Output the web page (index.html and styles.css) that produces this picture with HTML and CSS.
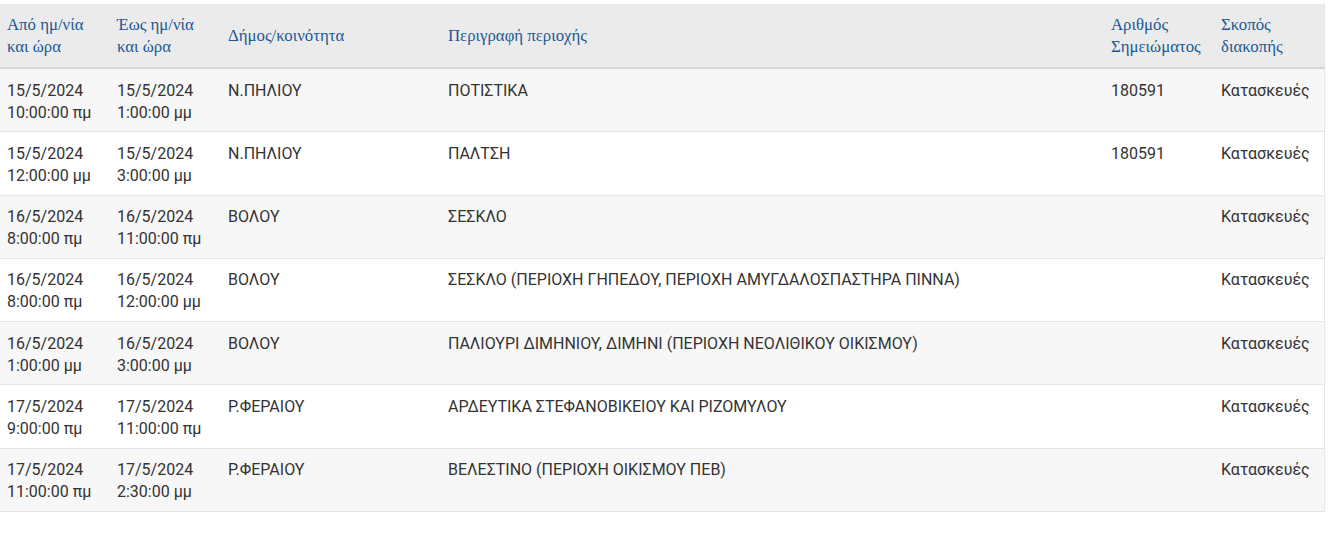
FILE: index.html
```html
<!DOCTYPE html>
<html lang="el">
<head>
<meta charset="utf-8">
<title>Διακοπές ρεύματος</title>
<link rel="stylesheet" href="styles.css">
</head>
<body>
<div class="wrap">
<table class="outages">
<colgroup>
<col class="c-from"><col class="c-to"><col class="c-dimos"><col class="c-desc"><col class="c-num"><col class="c-reason">
</colgroup>
<thead>
<tr>
<th>Από ημ/νία και ώρα</th>
<th>Έως ημ/νία και ώρα</th>
<th>Δήμος/κοινότητα</th>
<th>Περιγραφή περιοχής</th>
<th>Αριθμός Σημειώματος</th>
<th>Σκοπός διακοπής</th>
</tr>
</thead>
<tbody>
<tr><td>15/5/2024<br>10:00:00 πμ</td><td>15/5/2024<br>1:00:00 μμ</td><td>Ν.ΠΗΛΙΟΥ</td><td>ΠΟΤΙΣΤΙΚΑ</td><td>180591</td><td>Κατασκευές</td></tr>
<tr><td>15/5/2024<br>12:00:00 μμ</td><td>15/5/2024<br>3:00:00 μμ</td><td>Ν.ΠΗΛΙΟΥ</td><td>ΠΑΛΤΣΗ</td><td>180591</td><td>Κατασκευές</td></tr>
<tr><td>16/5/2024<br>8:00:00 πμ</td><td>16/5/2024<br>11:00:00 πμ</td><td>ΒΟΛΟΥ</td><td>ΣΕΣΚΛΟ</td><td></td><td>Κατασκευές</td></tr>
<tr><td>16/5/2024<br>8:00:00 πμ</td><td>16/5/2024<br>12:00:00 μμ</td><td>ΒΟΛΟΥ</td><td>ΣΕΣΚΛΟ (ΠΕΡΙΟΧΗ ΓΗΠΕΔΟΥ, ΠΕΡΙΟΧΗ ΑΜΥΓΔΑΛΟΣΠΑΣΤΗΡΑ ΠΙΝΝΑ)</td><td></td><td>Κατασκευές</td></tr>
<tr><td>16/5/2024<br>1:00:00 μμ</td><td>16/5/2024<br>3:00:00 μμ</td><td>ΒΟΛΟΥ</td><td>ΠΑΛΙΟΥΡΙ ΔΙΜΗΝΙΟΥ, ΔΙΜΗΝΙ (ΠΕΡΙΟΧΗ ΝΕΟΛΙΘΙΚΟΥ ΟΙΚΙΣΜΟΥ)</td><td></td><td>Κατασκευές</td></tr>
<tr><td>17/5/2024<br>9:00:00 πμ</td><td>17/5/2024<br>11:00:00 πμ</td><td>Ρ.ΦΕΡΑΙΟΥ</td><td>ΑΡΔΕΥΤΙΚΑ ΣΤΕΦΑΝΟΒΙΚΕΙΟΥ ΚΑΙ ΡΙΖΟΜΥΛΟΥ</td><td></td><td>Κατασκευές</td></tr>
<tr><td>17/5/2024<br>11:00:00 πμ</td><td>17/5/2024<br>2:30:00 μμ</td><td>Ρ.ΦΕΡΑΙΟΥ</td><td>ΒΕΛΕΣΤΙΝΟ (ΠΕΡΙΟΧΗ ΟΙΚΙΣΜΟΥ ΠΕΒ)</td><td></td><td>Κατασκευές</td></tr>
</tbody>
</table>
</div>
</body>
</html>
```
FILE: styles.css
```css
html, body {
  margin: 0;
  padding: 0;
  background: #ffffff;
}

.wrap {
  padding-top: 4px;
}

.outages {
  width: 1324px;
  table-layout: fixed;
  border-collapse: collapse;
  font-family: Roboto, "Noto Sans", sans-serif;
  font-size: 16px;
  color: #333333;
  border-right: 1px solid #e6e6e6;
}

.c-from { width: 110px; }
.c-to { width: 111px; }
.c-dimos { width: 221px; }
.c-desc { width: 662px; }
.c-num { width: 110px; }
.c-reason { width: 110px; }

.outages th {
  background: #ebebeb;
  font-family: "Liberation Serif", "DejaVu Serif", serif;
  font-weight: normal;
  font-size: 16.8px;
  color: #1c5897;
  text-align: left;
  vertical-align: middle;
  line-height: 22px;
  padding: 10px 7px 9px 7px;
  height: 44px;
  border-bottom: 2px solid #d6d6d6;
}

.outages th:nth-child(4),
.outages td:nth-child(4) {
  padding-left: 6px;
}

.outages td {
  vertical-align: top;
  line-height: 22px;
  padding: 10.5px 7px 7.8px 7px;
  height: 44px;
  border-bottom: 1px solid #e6e6e6;
}

.outages tbody tr:nth-child(odd) {
  background: #f7f7f7;
}

.outages tbody tr:nth-child(even) {
  background: #ffffff;
}
```
